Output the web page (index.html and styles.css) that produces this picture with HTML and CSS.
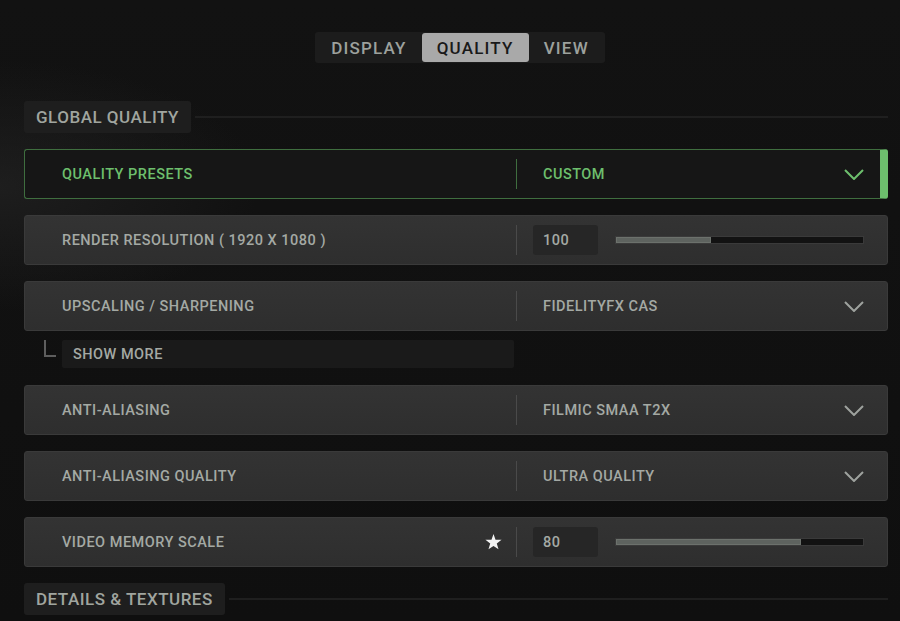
FILE: index.html
```html
<!DOCTYPE html>
<html lang="en">
<head>
<meta charset="utf-8">
<title>Graphics Settings - Quality</title>
<link rel="stylesheet" href="styles.css">
</head>
<body>
<div class="screen">
  <nav class="tabbar">
    <div class="tabs">
      <span class="tab">DISPLAY</span>
      <span class="tab active">QUALITY</span>
      <span class="tab">VIEW</span>
    </div>
  </nav>
  <main class="content">
    <div class="section-head">
      <h2 class="section-title">GLOBAL QUALITY</h2>
      <span class="rule"></span>
    </div>

    <div class="row row-selected">
      <div class="row-label">QUALITY PRESETS</div>
      <span class="divider"></span>
      <div class="row-value">
        <span class="value-text">CUSTOM</span>
        <svg class="chevron" width="20" height="11" viewBox="0 0 20 11"><polyline points="1,1 10,10 19,1" fill="none" stroke="currentColor" stroke-width="2"/></svg>
      </div>
    </div>

    <div class="row">
      <div class="row-label">RENDER RESOLUTION ( 1920 X 1080 )</div>
      <span class="divider"></span>
      <div class="row-slider">
        <span class="num">100</span>
        <span class="track"><span class="fill" style="width:38.6%"></span></span>
      </div>
    </div>

    <div class="row">
      <div class="row-label">UPSCALING / SHARPENING</div>
      <span class="divider"></span>
      <div class="row-value">
        <span class="value-text">FIDELITYFX CAS</span>
        <svg class="chevron" width="20" height="11" viewBox="0 0 20 11"><polyline points="1,1 10,10 19,1" fill="none" stroke="currentColor" stroke-width="2"/></svg>
      </div>
    </div>

    <div class="sub-row">
      <span class="connector"></span>
      <div class="show-more">SHOW MORE</div>
    </div>

    <div class="row">
      <div class="row-label">ANTI-ALIASING</div>
      <span class="divider"></span>
      <div class="row-value">
        <span class="value-text">FILMIC SMAA T2X</span>
        <svg class="chevron" width="20" height="11" viewBox="0 0 20 11"><polyline points="1,1 10,10 19,1" fill="none" stroke="currentColor" stroke-width="2"/></svg>
      </div>
    </div>

    <div class="row">
      <div class="row-label">ANTI-ALIASING QUALITY</div>
      <span class="divider"></span>
      <div class="row-value">
        <span class="value-text">ULTRA QUALITY</span>
        <svg class="chevron" width="20" height="11" viewBox="0 0 20 11"><polyline points="1,1 10,10 19,1" fill="none" stroke="currentColor" stroke-width="2"/></svg>
      </div>
    </div>

    <div class="row">
      <div class="row-label">
        <span>VIDEO MEMORY SCALE</span>
        <svg class="star" width="17" height="16" viewBox="0 0 24 23"><polygon points="12,0 14.9,8.3 23.6,8.4 16.7,13.7 19.2,22.1 12,17.1 4.8,22.1 7.3,13.7 0.4,8.4 9.1,8.3" fill="#f2f2f2"/></svg>
      </div>
      <span class="divider"></span>
      <div class="row-slider">
        <span class="num">80</span>
        <span class="track"><span class="fill" style="width:75%"></span></span>
      </div>
    </div>

    <div class="section-head">
      <h2 class="section-title">DETAILS &amp; TEXTURES</h2>
      <span class="rule"></span>
    </div>
  </main>
</div>
</body>
</html>
```

FILE: styles.css
```css
* { box-sizing: border-box; }

html, body {
  margin: 0;
  padding: 0;
}

body {
  width: 900px;
  height: 621px;
  overflow: hidden;
  font-family: Roboto, "Liberation Sans", sans-serif;
  font-weight: 500;
  color: #a4a9a4;
  background:
    radial-gradient(ellipse at 0% 30%, rgba(40,40,40,0.55) 0, rgba(20,20,20,0) 260px),
    linear-gradient(180deg, #121212 0, #0f0f0f 100%);
}

.screen {
  padding-top: 32px;
}

/* Tabs */
.tabbar {
  display: flex;
  justify-content: center;
  padding-left: 20px;
}

.tabs {
  display: flex;
  height: 31px;
  padding: 1px;
  background: #1c1c1c;
  border-radius: 3px;
}

.tab {
  display: flex;
  align-items: center;
  padding: 0 15px;
  font-size: 17px;
  letter-spacing: 1.2px;
  color: #9da19d;
  border-radius: 3px;
}

.tab.active {
  background: #a9a9a9;
  color: #191919;
}

/* Content */
.content {
  padding: 38px 12px 0 24px;
}

.section-head {
  display: flex;
  align-items: center;
  gap: 4px;
  margin-bottom: 16px;
}

.section-title {
  margin: 0;
  height: 32px;
  display: flex;
  align-items: center;
  padding: 0 12px;
  background: #1e1e1e;
  border-radius: 3px;
  font-size: 17px;
  font-weight: 500;
  letter-spacing: 0.5px;
  color: #a0a59f;
}

.rule {
  flex: 1;
  height: 2px;
  background: #1f1f1f;
}

/* Rows */
.row {
  display: flex;
  align-items: center;
  height: 50px;
  margin-bottom: 16px;
  background: linear-gradient(180deg, #333333 0, #2e2e2e 100%);
  border: 1px solid #3a3a3a;
  border-radius: 3px;
  font-size: 14.5px;
  letter-spacing: 0.5px;
}

.row-label {
  flex: 0 0 491px;
  display: flex;
  align-items: center;
  justify-content: space-between;
  padding: 0 14px 0 37px;
}

.divider {
  flex: 0 0 1px;
  align-self: center;
  height: 30px;
  background: #4a4a4a;
}

.row-value {
  flex: 1;
  display: flex;
  align-items: center;
  justify-content: space-between;
  padding: 0 23px 0 26px;
}

.chevron {
  display: block;
  color: #9ea29e;
}

.row-selected {
  background: #161616;
  border-color: #3f6e3f;
  border-right: 8px solid #6dbf6d;
  color: #6dbf6d;
}

.row-selected .divider {
  background: #3f6e3f;
}

.row-selected .row-value {
  padding-right: 16px;
}

.row-selected .chevron {
  color: #6dbf6d;
}

/* Slider */
.row-slider {
  flex: 1;
  display: flex;
  align-items: center;
  gap: 17px;
  padding: 0 23px 0 16px;
}

.num {
  flex: 0 0 65px;
  height: 30px;
  display: flex;
  align-items: center;
  padding-left: 10px;
  background: #262626;
  border-radius: 3px;
}

.track {
  flex: 1;
  height: 8px;
  background: #121212;
  border: 1px solid #3a3a3a;
  display: flex;
}

.fill {
  display: block;
  height: 100%;
  background: #5e635f;
  box-shadow: inset 0 0 0 1px #6c716c;
}

.star {
  display: block;
}

/* Show more */
.sub-row {
  display: flex;
  align-items: flex-start;
  margin: -7px 0 17px 20px;
}

.connector {
  flex: 0 0 12px;
  height: 17px;
  border-left: 2px solid #5e5e5e;
  border-bottom: 2px solid #5e5e5e;
  margin-right: 6px;
}

.show-more {
  width: 452px;
  height: 28px;
  display: flex;
  align-items: center;
  padding-left: 11px;
  background: #1a1a1a;
  border-radius: 2px;
  font-size: 14.5px;
  letter-spacing: 0.5px;
  color: #a4a9a4;
}
```
